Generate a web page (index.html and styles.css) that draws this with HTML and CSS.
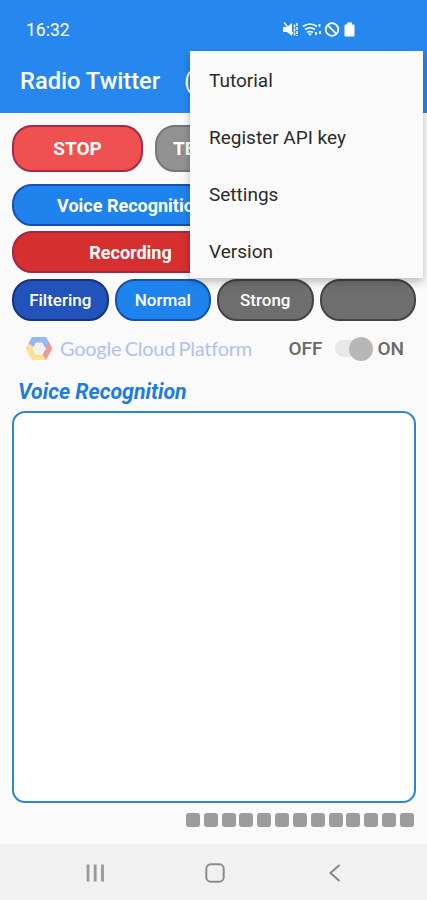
FILE: index.html
```
<!DOCTYPE html>
<html lang="en">

<head>
  <meta charset="UTF-8" />
  <meta name="viewport" content="width=device-width, initial-scale=1.0" />
  <title>Radio Twitter</title>
  <link rel="stylesheet" href="styles.css">
</head>

<body>
  <header class="header">
    <div class="status-bar">
      <span class="clock">16:32</span>
      <svg class="status-icons" width="76" height="20" viewBox="0 0 76 20">
        <!-- muted -->
        <path d="M1 7h4l5-4v13l-5-4H1z" fill="#fff" />
        <path d="M2 2.500l9 11" stroke="#fff" stroke-width="1.200" />
        <path d="M12.500 4.500v11M15 3v13" fill="none" stroke="#fff" stroke-width="1.500" stroke-dasharray="3 1" />
        <!-- wifi -->
        <path d="M21 6.500q7-5 14 0M23 9.500q5-3.500 10 0M25 12.500q3-2 6 0" fill="none" stroke="#fff" stroke-width="1.600" />
        <path d="M26 13.500h4l-2 2.500z" fill="#fff" />
        <path d="M37.500 4v4M34 12v4M38 11v4" stroke="#fff" stroke-width="1.800" stroke-dasharray="3 1" />
        <!-- blocked -->
        <circle cx="50" cy="9.500" r="6.300" fill="none" stroke="#fff" stroke-width="1.800" />
        <path d="M45.600 5.100l8.800 8.800" stroke="#fff" stroke-width="1.800" />
        <!-- battery -->
        <path d="M65 2.500h5v2h1.500q1 0 1 1v10q0 1-1 1h-8q-1 0-1-1v-10q0-1 1-1H65z" fill="#fff" />
      </svg>
    </div>
    <div class="title-bar">
      <h1>Radio Twitter</h1>
      <span class="paren">(</span>
    </div>
  </header>

  <nav class="menu">
    <a class="menu-item">Tutorial</a>
    <a class="menu-item">Register API key</a>
    <a class="menu-item">Settings</a>
    <a class="menu-item">Version</a>
  </nav>

  <main>
    <div class="row">
      <button class="btn stop">STOP</button>
      <button class="btn test">TE</button>
    </div>
    <button class="btn wide voice">Voice Recognition</button>
    <button class="btn wide recording">Recording</button>
    <div class="filters">
      <button class="btn small filtering">Filtering</button>
      <button class="btn small normal">Normal</button>
      <button class="btn small strong">Strong</button>
      <button class="btn small strong"></button>
    </div>

    <div class="platform">
      <svg class="gcp-logo" width="28" height="25" viewBox="0 0 28 25">
        <path d="M4 6.500L.5 12.500 7 24h14l-3-5.500h-7l-3.500-6L9 9z" fill="#fbe09a" />
        <path d="M24 6l3.500 6.500L21 24l-3.500-5.500 3.500-6-2-3.500z" fill="#ec9c95" />
        <path d="M7 1h14l3.500 6-4.500 4.500-3-5h-6L8.500 11 3.500 7z" fill="#99b8f3" />
        <circle cx="14" cy="12.500" r="5" fill="#eef0f4" />
      </svg>
      <span class="gcp-name">Google Cloud Platform</span>
      <div class="toggle">
        <span>OFF</span>
        <span class="switch"><span class="thumb"></span></span>
        <span>ON</span>
      </div>
    </div>

    <h2>Voice Recognition</h2>
    <div class="output"></div>
    <div class="meter">
      <i></i><i></i><i></i><i></i><i></i><i></i><i></i><i></i><i></i><i></i><i></i><i></i><i></i>
    </div>
  </main>

  <footer class="nav-bar">
    <svg width="20" height="20" viewBox="0 0 20 20">
      <path d="M3 1.500v17M10.200 1.500v17M17.500 1.500v17" stroke="#999" stroke-width="2.800" />
    </svg>
    <svg width="20" height="20" viewBox="0 0 20 20">
      <rect x="1.300" y="1.300" width="17.400" height="17.400" rx="4.500" fill="none" stroke="#8b8b8b" stroke-width="2" />
    </svg>
    <svg width="20" height="20" viewBox="0 0 20 20">
      <path d="M14.500 2L5.500 10l9 8" fill="none" stroke="#888" stroke-width="2" />
    </svg>
  </footer>
</body>

</html>
```

FILE: styles.css
```
* {
  box-sizing: border-box;
}
body {
  position: relative;
  display: flex;
  flex-direction: column;
  height: 900px;
  margin: 0;
  overflow: hidden;
  background: #fafafa;
  font-family: Roboto, "Liberation Sans", sans-serif;
}

.header {
  height: 113px;
  background: #2688ee;
  color: #fff;
}
.status-bar {
  display: flex;
  justify-content: space-between;
  align-items: center;
  height: 50px;
  padding: 9px 69px 0 26px;
}
.clock {
  font-size: 17.5px;
}
.title-bar {
  display: flex;
  align-items: center;
  height: 62px;
  padding-left: 20px;
  font-size: 24px;
}
h1 {
  width: 164px;
  margin: 0;
  font-size: 23.7px;
  font-weight: 500;
  white-space: nowrap;
}

/* overflow menu, opened over the page */
.menu {
  position: absolute;
  top: 51px;
  left: 190px;
  z-index: 2;
  width: 233px;
  height: 227px;
  background: #fafafa;
  box-shadow: 0 4px 8px rgba(0, 0, 0, 0.25);
}
.menu-item {
  display: flex;
  align-items: center;
  height: 57px;
  padding: 1px 0 0 19px;
  color: #2b2b2b;
  font-size: 19px;
}

main {
  flex: 1;
  padding: 12px 11px 0 12px;
}
.row {
  display: flex;
  gap: 12px;
}
.btn {
  display: block;
  padding: 0;
  border: 2px solid;
  border-radius: 20px;
  color: #fff;
  font-family: inherit;
  font-size: 18px;
  font-weight: 700;
  white-space: nowrap;
}
.stop {
  width: 131px;
  height: 47px;
  border-color: #a92846;
  background: #ef5050;
  font-size: 19px;
}
.test {
  width: 82px;
  height: 47px;
  padding-left: 16px;
  border-color: #777;
  background: #929292;
  font-size: 19px;
  text-align: left;
}
.wide {
  width: 237px;
  height: 42px;
}
.voice {
  margin-top: 12px;
  border-color: #174fb0;
  background: #1f83ee;
}
.recording {
  margin-top: 5px;
  border-color: #a32846;
  background: #d62f2f;
}
.filters {
  display: grid;
  grid-template-columns: repeat(4, 1fr);
  gap: 6px;
  margin-top: 6px;
}
.small {
  height: 42px;
  font-size: 17px;
  font-weight: 500;
}
.filtering {
  border-color: #183181;
  background: #2253bb;
}
.normal {
  border-color: #174fb0;
  background: #1f83ee;
}
.strong {
  border-color: #444;
  background: #6e6e6e;
}

.platform {
  display: flex;
  align-items: center;
  height: 55px;
  padding: 0 12px 0 13px;
}
.gcp-name {
  margin-left: 7px;
  padding-bottom: 2px;
  color: #b3c1ef;
  font-family: Lato, sans-serif;
  font-size: 20px;
  font-variant-ligatures: none;
  letter-spacing: -0.25px;
  white-space: nowrap;
  word-spacing: -1.5px;
}
.toggle {
  display: flex;
  align-items: center;
  margin-left: auto;
  color: #686868;
  font-size: 19px;
  font-weight: 500;
}
.switch {
  display: flex;
  justify-content: flex-end;
  align-items: center;
  width: 38px;
  height: 17px;
  margin: 0 4px 0 13px;
  border-radius: 9px;
  background: #e8e8e8;
}
.thumb {
  width: 24px;
  height: 24px;
  border-radius: 50%;
  background: #b7b7b7;
}

h2 {
  height: 35px;
  margin: 0 0 0 6px;
  color: #1c7ddd;
  font-size: 21.3px;
  font-style: italic;
  font-weight: 700;
  line-height: 32px;
}
.output {
  height: 392px;
  border: 2px solid #2b82da;
  border-radius: 13px;
  background: #fff;
}
.meter {
  display: flex;
  justify-content: space-between;
  width: 228px;
  margin: 10px 2px 0 auto;
}
.meter i {
  width: 14px;
  height: 14px;
  border-radius: 3px;
  background: #9c9c9c;
}

.nav-bar {
  display: flex;
  justify-content: space-between;
  align-items: center;
  height: 56px;
  padding: 2px 82px 0 85px;
  background: #f1f1f1;
}
```
